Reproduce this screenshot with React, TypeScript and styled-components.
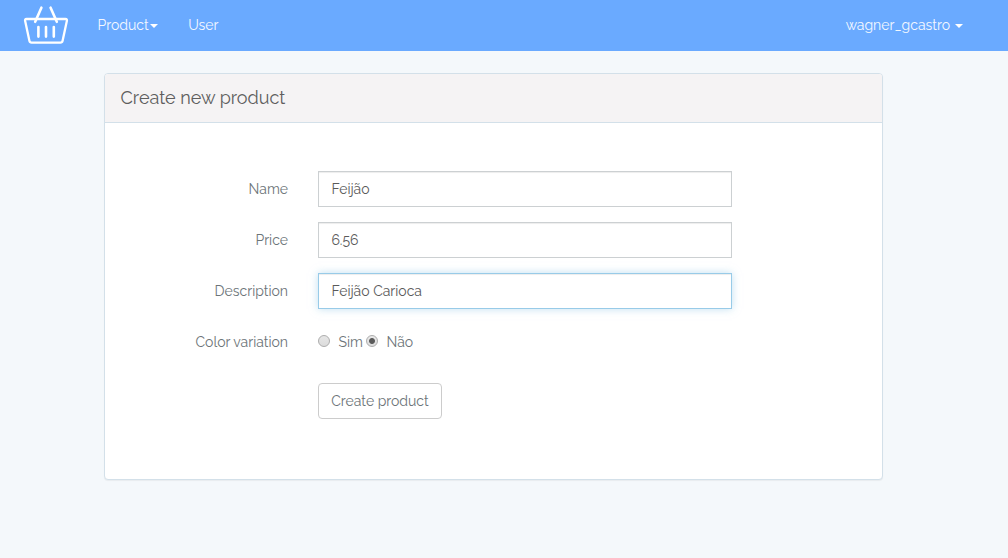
import React from "react";
import styled, { createGlobalStyle } from "styled-components";

const GlobalStyle = createGlobalStyle`
  * { box-sizing: border-box; }
  body {
    margin: 0;
    min-height: 100vh;
    background: #f4f8fb;
    color: #6c7478;
    font-family: Raleway, Lato, sans-serif;
    font-size: 14px;
    line-height: 22px;
  }
`;

const Navbar = styled.nav`
  display: flex;
  align-items: center;
  height: 51px;
  padding: 0 45px 0 22px;
  background: #6aaaff;
  color: #f4f8ff;
`;

const Logo = styled.svg`
  display: block;
  width: 48px;
  height: 51px;
  margin-right: 27.5px;
`;

const NavItem = styled.a<{ $gap?: number; $end?: boolean }>`
  display: flex;
  align-items: center;
  gap: ${(p) => p.$gap ?? 1}px;
  margin-right: ${(p) => (p.$end ? 0 : 30.5)}px;
  margin-left: ${(p) => (p.$end ? "auto" : "0")};
  padding-bottom: 2px;
  line-height: 22px;
`;

const Caret = styled.span`
  width: 8px;
  height: 4px;
  margin-top: 3px;
  border-top: 4px solid #fff;
  border-right: 4px solid transparent;
  border-left: 4px solid transparent;
`;

const Panel = styled.main`
  width: 779px;
  height: 407px;
  margin: 22px 0 0 104px;
  background: #fff;
  border: 1px solid #d3e0e9;
  border-radius: 4px;
  box-shadow: 0 1px 1px rgba(0, 0, 0, 0.05);
`;

const PanelTitle = styled.h1`
  display: flex;
  align-items: center;
  height: 49px;
  margin: 0;
  padding: 0 15.5px;
  background: #f5f3f4;
  border-bottom: 1px solid #d3e0e9;
  border-radius: 3px 3px 0 0;
  color: #5e5e5e;
  font-size: 18px;
  font-weight: 400;
`;

const Form = styled.form`
  display: flex;
  flex-direction: column;
  gap: 15px;
  padding-top: 48px;
`;

const Row = styled.div`
  display: grid;
  grid-template-columns: 183px 414px;
  column-gap: 30px;
  align-items: center;
  height: 36px;
`;

const Label = styled.label`
  justify-self: end;
  white-space: nowrap;
`;

const Input = styled.input<{ $active?: boolean }>`
  width: 100%;
  height: 36px;
  padding: 6px 12px 6px 12.4px;
  border: 1px solid ${(p) => (p.$active ? "#98cbe8" : "#ccd0d2")};
  border-radius: 0;
  outline: 0;
  background: #fff;
  color: #5a5a5a;
  font: inherit;
  box-shadow: inset 0 1px 1px rgba(0, 0, 0, 0.075)
    ${(p) => (p.$active ? ", 0 0 8px rgba(152, 203, 232, 0.6)" : "")};
`;

const Choices = styled.div`
  display: flex;
  align-items: center;
`;

const Choice = styled.label<{ $width: number }>`
  display: flex;
  align-items: center;
  gap: 8.4px;
  width: ${(p) => p.$width}px;
`;

const Radio = styled.input`
  appearance: none;
  flex: none;
  width: 12px;
  height: 12px;
  margin: -2px 0 0;
  border: 1px solid #adadad;
  border-radius: 50%;
  background: linear-gradient(#e6e6e6, #dcdcdc);
  &:checked {
    background: radial-gradient(circle, #5a5a5a 0 2.5px, transparent 3.4px),
      linear-gradient(#e9e9e9, #dcdcdc);
  }
`;

const Submit = styled.button`
  width: 124px;
  height: 36px;
  margin: 8px 0 0 213px;
  padding: 0;
  border: 1px solid #ccc;
  border-radius: 4px;
  background: #fff;
  color: #6c7478;
  font: inherit;
`;

const fields = [
  { label: "Name", value: "Feijão" },
  { label: "Price", value: "6.56" },
  { label: "Description", value: "Feijão Carioca", active: true },
];

export default function App() {
  return (
    <>
      <GlobalStyle />
      <Navbar>
        <Logo viewBox="0 0 48 51" fill="none" stroke="#fff" strokeLinecap="round" strokeLinejoin="round">
          <path
            strokeWidth="2.3"
            d="M4.5 19H43.5Q45.3 19 44.9 20.8L40.6 40.8Q40.2 42.6 38.4 42.6H9.6Q7.8 42.6 7.4 40.8L3.1 20.8Q2.7 19 4.5 19Z"
          />
          <path strokeWidth="2.6" d="M19.4 7.7 13.2 21.8M28.6 7.7 34.8 21.8" />
          <path strokeWidth="2.6" d="M16.4 27V36.6M24 27V36.6M31.8 27V36.6" />
        </Logo>
        <NavItem>Product<Caret /></NavItem>
        <NavItem>User</NavItem>
        <NavItem $gap={5} $end>wagner_gcastro<Caret /></NavItem>
      </Navbar>
      <Panel>
        <PanelTitle>Create new product</PanelTitle>
        <Form>
          {fields.map((f) => (
            <Row key={f.label}>
              <Label>{f.label}</Label>
              <Input defaultValue={f.value} $active={f.active} />
            </Row>
          ))}
          <Row>
            <Label>Color variation</Label>
            <Choices>
              <Choice $width={48}><Radio type="radio" name="variation" />Sim</Choice>
              <Choice $width={60}><Radio type="radio" name="variation" defaultChecked />Não</Choice>
            </Choices>
          </Row>
          <Submit type="button">Create product</Submit>
        </Form>
      </Panel>
    </>
  );
}
